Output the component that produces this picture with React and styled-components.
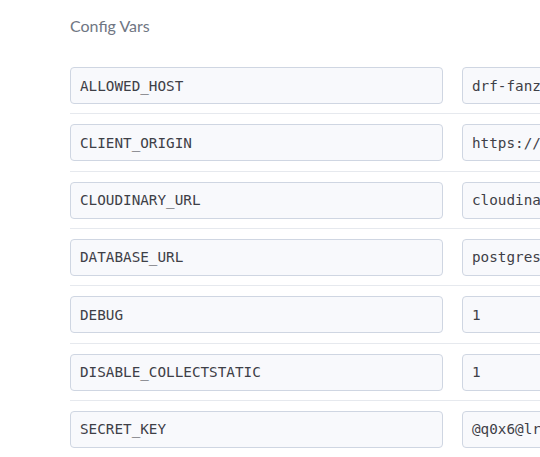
import React from 'react'
import styled, { createGlobalStyle } from 'styled-components'

const vars = [
  { key: 'ALLOWED_HOST', value: 'drf-fanzone-api.herokuapp.com' },
  { key: 'CLIENT_ORIGIN', value: 'https://fanzone-react.herokuapp.com' },
  { key: 'CLOUDINARY_URL', value: 'cloudinary://123456789:abc@fanzone' },
  { key: 'DATABASE_URL', value: 'postgres://user:pass@host:5432/db' },
  { key: 'DEBUG', value: '1' },
  { key: 'DISABLE_COLLECTSTATIC', value: '1' },
  { key: 'SECRET_KEY', value: '@q0x6@lrk2-9f' },
]

const GlobalStyle = createGlobalStyle`
  html, body {
    margin: 0;
    padding: 0;
    background: #ffffff;
    overflow: hidden;
  }
  body {
    font-family: Lato, "Open Sans", sans-serif;
  }
`

const ConfigVars = () => {
  return (
    <Page>
      <GlobalStyle />
      <Title>Config Vars</Title>
      <List>
        {vars.map((v, i) => (
          <VarRow key={v.key} last={i === vars.length - 1}>
            <Field>{v.key}</Field>
            <Field>{v.value}</Field>
          </VarRow>
        ))}
      </List>
    </Page>
  )
}

const Page = styled.div`
  box-sizing: border-box;
  width: 540px;
  height: 457px;
  overflow: hidden;
  padding: 16px 0 0 70px;
`

const Title = styled.div`
  font-family: Lato, "Open Sans", sans-serif;
  font-size: 16px;
  line-height: 20px;
  color: #6f7683;
  height: 20px;
`

const List = styled.div`
  display: flex;
  flex-direction: column;
  width: 900px;
  margin-top: 31px;
`

const VarRow = styled.div`
  display: flex;
  gap: 19px;
  padding: 0 0 ${(props) => (props.last ? '0' : '9.33px')};
  margin-bottom: ${(props) => (props.last ? '0' : '10px')};
  border-bottom: ${(props) => (props.last ? 'none' : '1px solid #e6e9ee')};
`

const Field = styled.div`
  box-sizing: border-box;
  flex: none;
  display: flex;
  align-items: center;
  width: 373px;
  height: 37px;
  padding: 0 9px;
  border: 1px solid #cfd6e2;
  border-radius: 4px;
  background: #f8f9fc;
  font-family: "DejaVu Sans Mono", monospace;
  font-size: 14.3px;
  color: #3e4047;
  white-space: nowrap;
  overflow: hidden;
`

export default ConfigVars
